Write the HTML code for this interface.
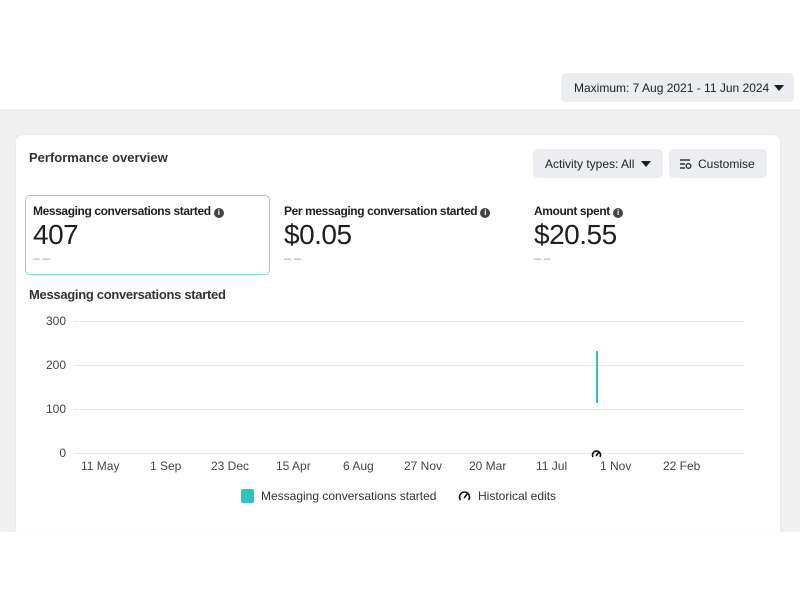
<!DOCTYPE html>
<html><head><style>
body{margin:0;width:800px;height:600px;background:#fff;font-family:"Liberation Sans",sans-serif;color:#1c1e21;position:relative;overflow:hidden}
.a{position:absolute;white-space:nowrap}
.btn{position:absolute;background:#ebedf0;border-radius:5px;font-size:12px;color:#1c1e21}
.grey{position:absolute;left:0;top:109px;width:800px;height:423px;background:#f0f0f0}
.card{position:absolute;left:16px;top:135px;width:764px;height:397px;background:#fff;border-radius:7px 7px 0 0;box-shadow:0 0 1px rgba(0,0,0,.15)}
.lbl{font-size:12px;font-weight:bold;letter-spacing:-0.4px}
.big{font-size:28px;color:#1c1e21;letter-spacing:-0.5px}
.dash{font-size:12px;color:#999}
.i{display:inline-block;width:10px;height:10px;border-radius:50%;background:#444;color:#fff;font-size:8px;text-align:center;line-height:10px;vertical-align:0px;margin-left:3px}
.gl{position:absolute;left:74px;width:670px;height:1px;background:#e4e6e8}
.yl{position:absolute;font-size:12px;color:#444;text-align:right;width:30px;left:36px}
.xl{position:absolute;top:459px;font-size:12px;color:#444}
.tri{position:absolute;width:0;height:0;border-left:5px solid transparent;border-right:5px solid transparent;border-top:6px solid #1c1e21}
</style></head><body>
<div class="btn" style="left:561px;top:73px;width:233px;height:29px"><span class="a" style="left:13px;top:8px">Maximum: 7 Aug 2021 - 11 Jun 2024</span><span class="tri" style="left:213px;top:12px"></span></div>
<div class="grey"></div>
<div class="card"></div>
<div class="a" style="left:29px;top:150px;font-size:13px;font-weight:bold;color:#333">Performance overview</div>
<div class="btn" style="left:533px;top:149px;width:130px;height:29px"><span class="a" style="left:12px;top:8px">Activity types: All</span><span class="tri" style="left:108px;top:12px"></span></div>
<div class="btn" style="left:669px;top:149px;width:98px;height:29px">
<svg class="a" style="left:10px;top:9px" width="13" height="12" viewBox="0 0 13 12"><path d="M1 2h10M1 6h5M1 10h5" stroke="#333" stroke-width="1.4"/><circle cx="9.5" cy="8" r="2.3" fill="none" stroke="#333" stroke-width="1.4"/></svg>
<span class="a" style="left:29px;top:8px">Customise</span></div>
<div class="a" style="left:25px;top:195px;width:243px;height:78px;border:1px solid #7fd6d6;border-radius:5px"></div>
<div class="a lbl" style="left:33px;top:204px">Messaging conversations started<span class="i">i</span></div>
<div class="a big" style="left:33px;top:219px">407</div>
<div class="a dash" style="left:33px;top:251px">– –</div>
<div class="a lbl" style="left:284px;top:204px">Per messaging conversation started<span class="i">i</span></div>
<div class="a big" style="left:284px;top:219px">$0.05</div>
<div class="a dash" style="left:284px;top:251px">– –</div>
<div class="a lbl" style="left:534px;top:204px">Amount spent<span class="i">i</span></div>
<div class="a big" style="left:534px;top:219px">$20.55</div>
<div class="a dash" style="left:534px;top:251px">– –</div>
<div class="a" style="left:29px;top:287px;font-size:13px;font-weight:bold;color:#333;letter-spacing:-0.3px">Messaging conversations started</div>
<div class="gl" style="top:321px"></div><div class="gl" style="top:365px"></div><div class="gl" style="top:409px"></div><div class="gl" style="top:453px"></div>
<div class="yl" style="top:314px">300</div><div class="yl" style="top:358px">200</div><div class="yl" style="top:402px">100</div><div class="yl" style="top:446px">0</div>
<div class="a" style="left:596px;top:351px;width:2px;height:52px;background:#2ec4c4"></div>
<div class="xl" style="left:81px">11 May</div><div class="xl" style="left:150px">1 Sep</div><div class="xl" style="left:211px">23 Dec</div><div class="xl" style="left:276px">15 Apr</div><div class="xl" style="left:343px">6 Aug</div><div class="xl" style="left:404px">27 Nov</div><div class="xl" style="left:469px">20 Mar</div><div class="xl" style="left:536px">11 Jul</div><div class="xl" style="left:600px">1 Nov</div><div class="xl" style="left:663px">22 Feb</div>
<svg class="a" style="left:591px;top:449px" width="11" height="10" viewBox="0 0 11 10"><path d="M2 8A4 4 0 1 1 9 8" fill="none" stroke="#111" stroke-width="1.6"/><path d="M5 7L8 3" stroke="#111" stroke-width="1.6"/></svg>
<div class="a" style="left:241px;top:489px;width:13px;height:14px;background:#2ec4c4;border-radius:2px"></div>
<div class="a" style="left:261px;top:489px;font-size:12px;color:#333">Messaging conversations started</div>
<svg class="a" style="left:458px;top:490px" width="13" height="12" viewBox="0 0 13 12"><path d="M2.5 10A5 5 0 1 1 10.5 10" fill="none" stroke="#111" stroke-width="1.6"/><path d="M6 8L9.5 3.5" stroke="#111" stroke-width="1.6"/></svg>
<div class="a" style="left:478px;top:489px;font-size:12px;color:#333">Historical edits</div>
</body></html>
